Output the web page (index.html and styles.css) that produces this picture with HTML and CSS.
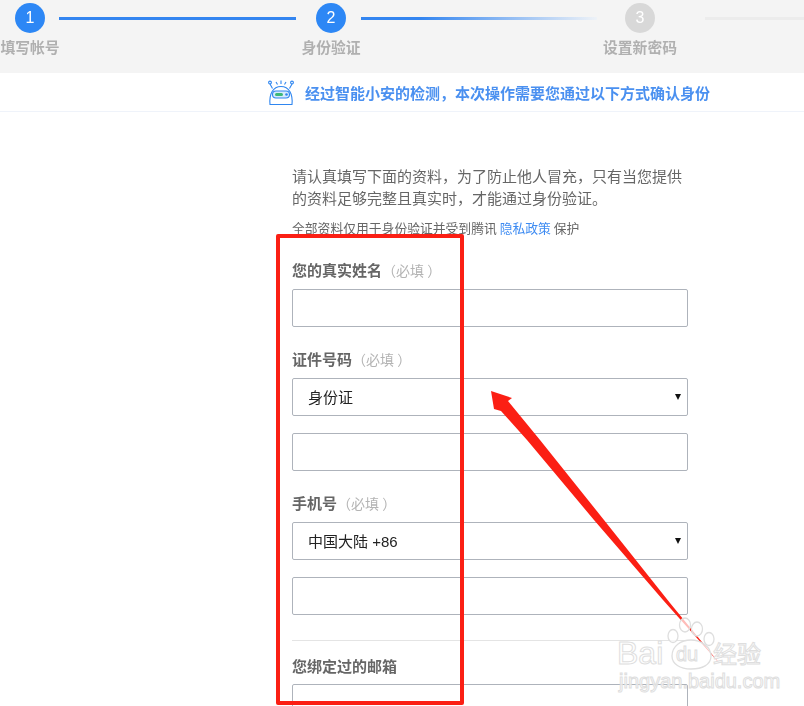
FILE: index.html
```html
<!DOCTYPE html>
<html lang="zh-CN">
<head>
<meta charset="utf-8">
<title>身份验证</title>
<link rel="stylesheet" href="styles.css">
</head>
<body>
<div class="page">
  <header class="steps">
    <div class="step step-one">
      <div class="step-track"><span class="dot dot-on">1</span><span class="line line-on line-one"></span></div>
      <div class="step-label">填写帐号</div>
    </div>
    <div class="step step-two">
      <div class="step-track"><span class="dot dot-on">2</span><span class="line line-fade"></span></div>
      <div class="step-label">身份验证</div>
    </div>
    <div class="step step-three">
      <div class="step-track"><span class="dot dot-off">3</span><span class="line line-off"></span></div>
      <div class="step-label">设置新密码</div>
    </div>
  </header>
  <div class="banner">
    <svg class="robot" width="28" height="27" viewBox="0 0 28 27" fill="none" stroke="#2f86f0" stroke-width="1.100">
      <circle cx="3" cy="3.500" r="1.400"/><circle cx="25" cy="3.500" r="1.400"/>
      <path d="M3 5 5.500 9.500M25 5 22.500 9.500M9 3l1.500 2.500M14 1.500v3.500M19 3l-1.500 2.500"/>
      <path d="M3 25.500C2 15 6 7.500 14 7.500S26 15 25 25.500z" fill="#fff"/>
      <rect x="5.500" y="12" width="17" height="7" rx="3.500" fill="#d6eafc"/>
      <rect x="8" y="14" width="8" height="3" rx="1.500" fill="#3cb878" stroke="none"/>
      <circle cx="19.500" cy="15.500" r="1.300" fill="#2f86f0" stroke="none"/>
    </svg>
    <span class="banner-text">经过智能小安的检测，本次操作需要您通过以下方式确认身份</span>
  </div>
  <main class="form">
    <p class="intro">请认真填写下面的资料，为了防止他人冒充，只有当您提供的资料足够完整且真实时，才能通过身份验证。</p>
    <p class="note">全部资料仅用于身份验证并受到腾讯 <a class="link" href="#">隐私政策</a> 保护</p>
    <label class="label label-first">您的真实姓名<span class="req">（必填 ）</span></label>
    <input class="field" type="text">
    <label class="label label-next">证件号码<span class="req">（必填 ）</span></label>
    <div class="select-wrap"><select class="field select"><option>身份证</option></select></div>
    <input class="field field-gap" type="text">
    <label class="label label-next">手机号<span class="req">（必填 ）</span></label>
    <div class="select-wrap"><select class="field select"><option>中国大陆 +86</option></select></div>
    <input class="field field-gap" type="text">
    <hr class="rule">
    <label class="label label-mail">您绑定过的邮箱</label>
    <input class="field" type="text">
  </main>

  <div class="redbox"></div>
  <svg class="arrow" width="804" height="706" viewBox="0 0 804 706">
    <polygon points="491,391 512,398 508,401 540,440 604,520 670,603 720,664 663,600 594,520 527,440 501,411 494,409" fill="#fb1f14"/>
  </svg>
  <div class="watermark">
    <svg class="paw" width="60" height="60" viewBox="0 0 60 60" fill="#fff" fill-opacity=".7" stroke="#dedede" stroke-width="1.300">
      <ellipse cx="9" cy="20" rx="5" ry="6.500"/>
      <ellipse cx="21" cy="9" rx="5.500" ry="7"/>
      <ellipse cx="33" cy="13" rx="5.500" ry="7"/>
      <ellipse cx="45" cy="23" rx="5" ry="6.500"/>
      <path d="M8 40c0-10 9-16 19-16s20 7 20 16c0 9-9 13-20 13S8 48 8 40z"/>
    </svg>
    <span class="wm-bai">Bai</span><span class="wm-du">du</span><span class="wm-jy">经验</span>
    <span class="wm-url">jingyan.baidu.com</span>
  </div>
</div>
</body>
</html>
```
FILE: styles.css
```css
* { box-sizing: border-box; }
html, body { margin: 0; padding: 0; background: #fff; }
body {
  width: 804px;
  height: 706px;
  overflow: hidden;
  font-family: "Noto Sans CJK SC", "Liberation Sans", sans-serif;
  color: #555;
}
.page { position: relative; width: 804px; height: 706px; overflow: hidden; }

.steps {
  display: flex;
  height: 73px;
  padding: 3px 0 0 15px;
  background: #f4f4f4;
  filter: blur(.35px);
}
.step-one { width: 301px; }
.step-two { width: 309px; }
.step-three { flex: 1; }
.step-track { display: flex; align-items: center; height: 30px; }
.dot {
  flex: none;
  width: 30px;
  height: 30px;
  border-radius: 50%;
  text-align: center;
  font: 16px/30px "Liberation Sans", sans-serif;
  color: #fff;
}
.dot-on { background: #2d87f5; }
.dot-off { background: #d8d8d8; }
.line { display: block; height: 3px; }
.line-on { background: #3385f0; margin-left: 14px; width: 237px; }
.line-fade { margin-left: 15px; width: 236px; background: linear-gradient(90deg, #3385f0 0%, #3385f0 25%, #eef2f7 100%); }
.line-off { flex: 1; background: #ececec; margin-left: 50px; }
.step-label {
  display: flex;
  justify-content: center;
  width: 30px;
  margin-top: 3px;
  font-size: 14.800px;
  line-height: 22px;
  font-weight: 700;
  white-space: nowrap;
  color: #b0b0b0;
}

.banner {
  display: flex;
  align-items: center;
  height: 39px;
  padding: 0 0 0 267px;
  border-bottom: 1px solid #eff3fa;
  background: #fff;
  filter: blur(.3px);
}
.robot { flex: none; }
.banner-text {
  margin-left: 10px;
  font-size: 15px;
  font-weight: 700;
  color: #4a90f0;
  white-space: nowrap;
}

.form { width: 396px; margin-left: 292px; padding-top: 53px; filter: blur(.3px); }
.intro { margin: 0; font-size: 15px; line-height: 22px; width: 396px; color: #666; }
.note { margin: 9px 0 0; font-size: 12.800px; line-height: 20px; color: #666; }
.link { color: #3d8bf2; text-decoration: none; }
.label {
  display: block;
  font-size: 15px;
  line-height: 20px;
  font-weight: 700;
  color: #666;
}
.label-first { margin-top: 22px; margin-bottom: 9px; }
.label-next { margin-top: 22px; margin-bottom: 9px; }
.label-mail { margin-top: 15px; margin-bottom: 8px; }
.req { font-weight: 400; color: #b4b4b4; font-size: 14px; }
.field {
  display: block;
  width: 396px;
  height: 38px;
  margin: 0;
  padding: 0 15px;
  border: 1px solid #aeb3bb;
  border-radius: 2px;
  background: #fff;
  outline: none;
  font: 15px "Liberation Sans", "Noto Sans CJK SC", sans-serif;
  color: #222;
}
.field-gap { margin-top: 17px; }
.select { appearance: none; -webkit-appearance: none; }
.select-wrap { position: relative; width: 396px; }
.select-wrap::after {
  content: "";
  position: absolute;
  right: 7px;
  top: 16px;
  border-left: 3.500px solid transparent;
  border-right: 3.500px solid transparent;
  border-top: 6px solid #111;
}
.rule { margin: 25px 0 0; border: 0; border-top: 1px solid #e4e4e4; }

.redbox {
  position: absolute;
  left: 276px;
  top: 234px;
  width: 188px;
  height: 471px;
  border: 4px solid #fb1f14;
  border-radius: 2px;
}
.arrow { position: absolute; left: 0; top: 0; pointer-events: none; }

.watermark { position: absolute; left: 0; top: 0; width: 804px; height: 706px; pointer-events: none; }
.paw { position: absolute; left: 664px; top: 616px; }
.wm-bai, .wm-du, .wm-jy, .wm-url {
  position: absolute;
  color: rgba(255,255,255,.75);
  -webkit-text-stroke: 1px #dedede;
  white-space: nowrap;
  font-family: "Liberation Sans", sans-serif;
}
.wm-bai { left: 617px; top: 633px; font-size: 32px; line-height: 40px; }
.wm-du { left: 676px; top: 641px; font-size: 20px; line-height: 26px; }
.wm-jy { left: 713px; top: 636px; font-size: 24px; line-height: 34px; font-family: "Noto Sans CJK SC", sans-serif; }
.wm-url { left: 619px; top: 669px; font-size: 20px; line-height: 24px; }
```
